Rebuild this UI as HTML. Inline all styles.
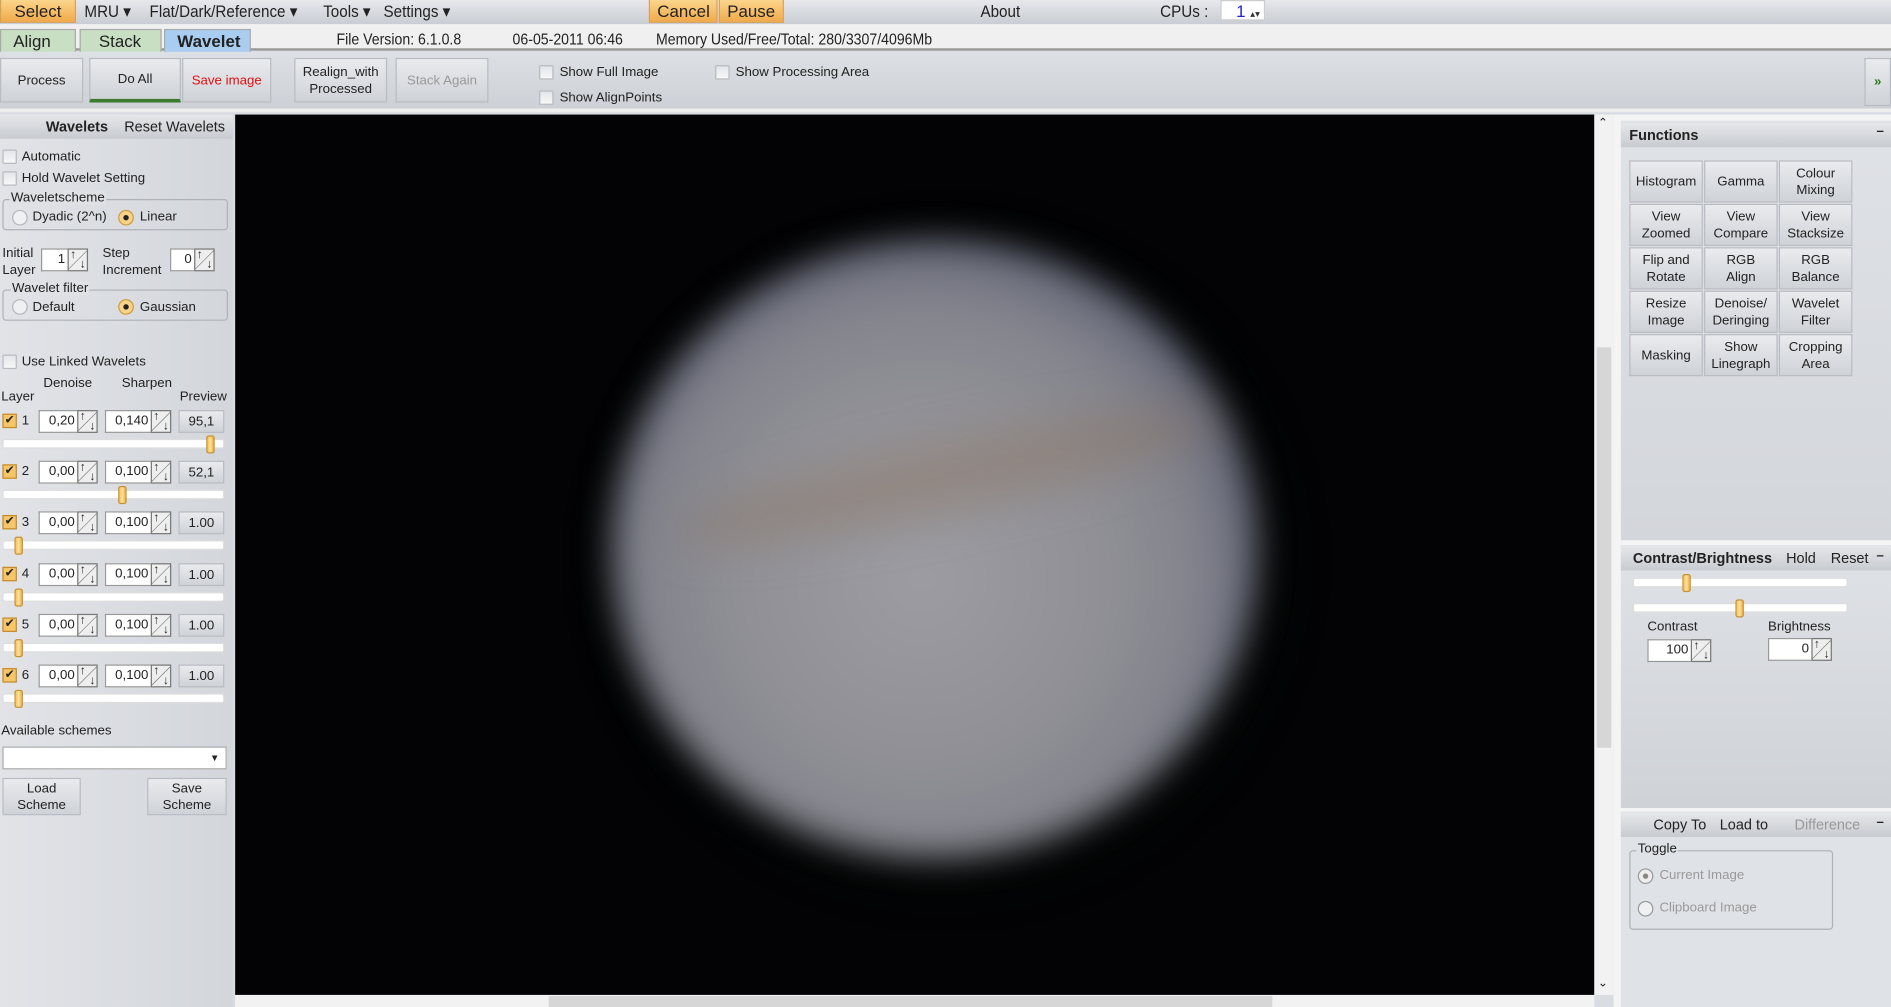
<!DOCTYPE html>
<html><head><meta charset="utf-8"><style>
*{box-sizing:border-box;margin:0;padding:0}
html,body{width:1891px;height:1007px;overflow:hidden;background:#d8dbe0}
#w{position:absolute;left:0;top:0;width:1568px;height:835px;transform:scale(1.20599);transform-origin:0 0;font-family:"Liberation Sans",sans-serif;font-size:11px;color:#222;background:#d9dce1}
.a{position:absolute}
.bar1{left:0;top:0;width:1568px;height:20px;background:linear-gradient(#e6e8ec,#c9ccd2)}
.menu{top:1px;font-size:14px;transform:scaleX(.9);transform-origin:0 0;color:#222}
.ob{background:linear-gradient(#fbd58c,#f1a94a);border:1px solid #d9a050;height:20px;font-size:14px;padding:1px 6px;color:#222}
.bar2{left:0;top:20px;width:1568px;height:22px;background:#f0f0f0;border-bottom:2px solid #999}
.tab{top:24px;height:19px;font-size:14px;padding:1px 10px;border:1px solid #aaa;border-bottom:none}
.bar3{left:0;top:43px;width:1568px;height:50px;background:linear-gradient(#dde0e4,#cdd0d6);border-bottom:3px solid #eee}
.btn{background:linear-gradient(#e9ebee,#cfd2d7);border:1px solid #b9bcc2;text-align:center;font-size:11px;display:flex;align-items:center;justify-content:center;line-height:14px}
.cb{width:12px;height:12px;border:1px solid #b7bbc1;background:linear-gradient(#e4e6ea,#f7f7f7);border-radius:1px}
.cbk{width:12px;height:12px;border:1px solid #c58a2a;background:#f5c66a;color:#222;font-size:10px;line-height:10px;text-align:center}
.inp{background:#fff;border:1px solid #999;border-right:none;text-align:right;padding-right:2px;height:19px;line-height:17px;font-size:11px}
.spin{width:17px;height:19px;border:1px solid #777;background:linear-gradient(135deg,#eee 48%,#666 50%,#eee 52%);font-size:10px;font-weight:bold}
.spin::before{content:"↑";position:absolute;left:1px;top:-1px}
.spin::after{content:"↓";position:absolute;right:1px;bottom:-1px}
.sl{height:8px;background:#fff;border:1px solid #ddd;border-radius:2px}
.th{width:7px;height:15px;background:linear-gradient(90deg,#f6c255,#fde2a0,#f1b040);border:1px solid #c99030;border-radius:2px}
.grp{border:1px solid #aeb2b8;border-radius:3px}
.rad{width:13px;height:13px;border-radius:50%;border:1px solid #b2b6bc;background:#eef0f2}
.radon{width:13px;height:13px;border-radius:50%;border:1px solid #d29a3a;background:radial-gradient(#222 25%,#f9d38a 32%)}
.fb{width:61px;height:35px}
.ph{background:linear-gradient(#e5e7ea,#c8cbd0);height:20px;font-weight:bold;font-size:12px}
</style></head><body><div id="w">
<div class="a bar1"></div>
<div class="a ob" style="left:0;top:-1px;width:63px;text-align:center">Select</div>
<div class="a menu" style="left:70px">MRU ▾</div>
<div class="a menu" style="left:124px">Flat/Dark/Reference ▾</div>
<div class="a menu" style="left:268px">Tools ▾</div>
<div class="a menu" style="left:318px">Settings ▾</div>
<div class="a ob" style="left:538px;top:-1px;width:57px">Cancel</div>
<div class="a ob" style="left:596px;top:-1px;width:54px">Pause</div>
<div class="a menu" style="left:813px">About</div>
<div class="a menu" style="left:962px">CPUs :</div>
<div class="a" style="left:1012px;top:0;width:37px;height:17px;background:#fff;border:1px solid #ccc;color:#22c;font-size:14px;padding-left:12px">1 <span style="font-size:8px;color:#333">▴▾</span></div>

<div class="a bar2"></div>
<div class="a tab" style="left:0;background:#c8dfc4;width:63px">Align</div>
<div class="a tab" style="left:66px;background:#c8dfc4;width:68px;padding-left:15px">Stack</div>
<div class="a tab" style="left:136px;background:#a9cdf0;width:72px;font-weight:bold">Wavelet</div>
<div class="a" style="left:279px;top:25px;font-size:13px;transform:scaleX(.9);transform-origin:0 0">File Version: 6.1.0.8</div>
<div class="a" style="left:425px;top:25px;font-size:13px;transform:scaleX(.9);transform-origin:0 0">06-05-2011 06:46</div>
<div class="a" style="left:544px;top:25px;font-size:13px;transform:scaleX(.9);transform-origin:0 0">Memory Used/Free/Total: 280/3307/4096Mb</div>

<div class="a bar3"></div>
<div class="a btn" style="left:0;top:48px;width:69px;height:37px">Process</div>
<div class="a btn" style="left:74px;top:48px;width:76px;height:37px;border-bottom:3px solid #3b7a2f">Do All</div>
<div class="a btn" style="left:151px;top:48px;width:74px;height:37px;color:#e01010">Save image</div>
<div class="a btn" style="left:244px;top:48px;width:77px;height:37px">Realign_with<br>Processed</div>
<div class="a btn" style="left:328px;top:48px;width:77px;height:37px;color:#999">Stack Again</div>
<div class="a cb" style="left:447px;top:54px"></div><div class="a" style="left:464px;top:54px">Show Full Image</div>
<div class="a cb" style="left:447px;top:75px"></div><div class="a" style="left:464px;top:75px">Show AlignPoints</div>
<div class="a cb" style="left:593px;top:54px"></div><div class="a" style="left:610px;top:54px">Show Processing Area</div>
<div class="a btn" style="left:1546px;top:48px;width:22px;height:40px;color:#2a7a1a;font-weight:bold">»</div>

<!-- left panel -->
<div class="a" style="left:0;top:95px;width:193px;height:740px;background:linear-gradient(90deg,#e1e3e7,#d3d6db)"></div>
<div class="a ph" style="left:0;top:95px;width:193px"></div>
<div class="a" style="left:38px;top:98px;font-weight:bold;font-size:12px">Wavelets</div>
<div class="a" style="left:103px;top:98px;font-size:12px">Reset Wavelets</div>
<div class="a cb" style="left:2px;top:124px"></div><div class="a" style="left:18px;top:124px">Automatic</div>
<div class="a cb" style="left:2px;top:142px"></div><div class="a" style="left:18px;top:142px">Hold Wavelet Setting</div>
<div class="a grp" style="left:2px;top:165px;width:187px;height:26px"></div>
<div class="a" style="left:8px;top:158px;background:#dfe1e5;padding:0 1px">Waveletscheme</div>
<div class="a rad" style="left:10px;top:174px"></div><div class="a" style="left:27px;top:174px">Dyadic (2^n)</div>
<div class="a radon" style="left:98px;top:174px"></div><div class="a" style="left:116px;top:174px">Linear</div>
<div class="a" style="left:2px;top:203px;line-height:14px">Initial<br>Layer</div>
<div class="a inp" style="left:34px;top:206px;width:22px">1</div><div class="a spin" style="left:56px;top:206px"></div>
<div class="a" style="left:85px;top:203px;line-height:14px">Step<br>Increment</div>
<div class="a inp" style="left:141px;top:206px;width:20px">0</div><div class="a spin" style="left:161px;top:206px"></div>
<div class="a grp" style="left:2px;top:240px;width:187px;height:26px"></div>
<div class="a" style="left:9px;top:233px;background:#dfe1e5;padding:0 1px">Wavelet filter</div>
<div class="a rad" style="left:10px;top:248px"></div><div class="a" style="left:27px;top:249px">Default</div>
<div class="a radon" style="left:98px;top:248px"></div><div class="a" style="left:116px;top:249px">Gaussian</div>
<div class="a cb" style="left:2px;top:294px"></div><div class="a" style="left:18px;top:294px">Use Linked Wavelets</div>
<div class="a" style="left:36px;top:312px">Denoise</div><div class="a" style="left:101px;top:312px">Sharpen</div>
<div class="a" style="left:1px;top:323px">Layer</div><div class="a" style="left:149px;top:323px">Preview</div>

<div class="a" style="left:0;top:340px">
 <div class="a cbk" style="left:2px;top:3px">✔</div><div class="a" style="left:18px;top:3px">1</div>
 <div class="a inp" style="left:32px;top:0;width:32px">0,20</div><div class="a spin" style="left:64px;top:0"></div>
 <div class="a inp" style="left:87px;top:0;width:38px">0,140</div><div class="a spin" style="left:125px;top:0"></div>
 <div class="a btn" style="left:148px;top:0;width:38px;height:19px">95,1</div>
 <div class="a sl" style="left:2px;top:24px;width:184px"></div><div class="a th" style="left:171px;top:21px"></div>
</div>
<div class="a" style="left:0;top:382px">
 <div class="a cbk" style="left:2px;top:3px">✔</div><div class="a" style="left:18px;top:3px">2</div>
 <div class="a inp" style="left:32px;top:0;width:32px">0,00</div><div class="a spin" style="left:64px;top:0"></div>
 <div class="a inp" style="left:87px;top:0;width:38px">0,100</div><div class="a spin" style="left:125px;top:0"></div>
 <div class="a btn" style="left:148px;top:0;width:38px;height:19px">52,1</div>
 <div class="a sl" style="left:2px;top:24px;width:184px"></div><div class="a th" style="left:98px;top:21px"></div>
</div>
<div class="a" style="left:0;top:424px">
 <div class="a cbk" style="left:2px;top:3px">✔</div><div class="a" style="left:18px;top:3px">3</div>
 <div class="a inp" style="left:32px;top:0;width:32px">0,00</div><div class="a spin" style="left:64px;top:0"></div>
 <div class="a inp" style="left:87px;top:0;width:38px">0,100</div><div class="a spin" style="left:125px;top:0"></div>
 <div class="a btn" style="left:148px;top:0;width:38px;height:19px">1.00</div>
 <div class="a sl" style="left:2px;top:24px;width:184px"></div><div class="a th" style="left:12px;top:21px"></div>
</div>
<div class="a" style="left:0;top:467px">
 <div class="a cbk" style="left:2px;top:3px">✔</div><div class="a" style="left:18px;top:3px">4</div>
 <div class="a inp" style="left:32px;top:0;width:32px">0,00</div><div class="a spin" style="left:64px;top:0"></div>
 <div class="a inp" style="left:87px;top:0;width:38px">0,100</div><div class="a spin" style="left:125px;top:0"></div>
 <div class="a btn" style="left:148px;top:0;width:38px;height:19px">1.00</div>
 <div class="a sl" style="left:2px;top:24px;width:184px"></div><div class="a th" style="left:12px;top:21px"></div>
</div>
<div class="a" style="left:0;top:509px">
 <div class="a cbk" style="left:2px;top:3px">✔</div><div class="a" style="left:18px;top:3px">5</div>
 <div class="a inp" style="left:32px;top:0;width:32px">0,00</div><div class="a spin" style="left:64px;top:0"></div>
 <div class="a inp" style="left:87px;top:0;width:38px">0,100</div><div class="a spin" style="left:125px;top:0"></div>
 <div class="a btn" style="left:148px;top:0;width:38px;height:19px">1.00</div>
 <div class="a sl" style="left:2px;top:24px;width:184px"></div><div class="a th" style="left:12px;top:21px"></div>
</div>
<div class="a" style="left:0;top:551px">
 <div class="a cbk" style="left:2px;top:3px">✔</div><div class="a" style="left:18px;top:3px">6</div>
 <div class="a inp" style="left:32px;top:0;width:32px">0,00</div><div class="a spin" style="left:64px;top:0"></div>
 <div class="a inp" style="left:87px;top:0;width:38px">0,100</div><div class="a spin" style="left:125px;top:0"></div>
 <div class="a btn" style="left:148px;top:0;width:38px;height:19px">1.00</div>
 <div class="a sl" style="left:2px;top:24px;width:184px"></div><div class="a th" style="left:12px;top:21px"></div>
</div>
<div class="a" style="left:1px;top:600px">Available schemes</div>
<div class="a" style="left:2px;top:619px;width:186px;height:19px;background:#fff;border:1px solid #aaa;text-align:right;padding-right:5px;font-size:8px;line-height:17px">▼</div>
<div class="a btn" style="left:2px;top:645px;width:65px;height:31px">Load<br>Scheme</div>
<div class="a btn" style="left:122px;top:645px;width:66px;height:31px">Save<br>Scheme</div>

<!-- image -->
<div class="a" style="left:195px;top:95px;width:1127px;height:730px;background:#030305;overflow:hidden">
 <div class="a" style="left:290px;top:80px;width:600px;height:580px;border-radius:50%;background:radial-gradient(rgba(25,60,15,.55),transparent 70%);filter:blur(20px)"></div>
 <div class="a" style="left:312px;top:104px;width:536px;height:512px;border-radius:50%;background:radial-gradient(ellipse at 48% 55%,#9c9ca2 0%,#8f8f95 40%,#82838c 58%,#5d6072 74%,#2a2c3a 88%,#08080e 100%);filter:blur(14px)"></div>
 <div class="a" style="left:360px;top:270px;width:460px;height:60px;border-radius:50%;background:rgba(140,115,95,.4);transform:rotate(-12deg);filter:blur(18px)"></div>
</div>
<div class="a" style="left:1322px;top:95px;width:16px;height:730px;background:#f2f2f2"></div>
<div class="a" style="left:1324px;top:288px;width:12px;height:332px;background:#d6d6d6"></div>
<div class="a" style="left:1325px;top:97px;font-size:10px">⌃</div>
<div class="a" style="left:1325px;top:810px;font-size:10px">⌄</div>
<div class="a" style="left:195px;top:825px;width:1127px;height:10px;background:#f2f2f2"></div>
<div class="a" style="left:455px;top:826px;width:600px;height:9px;background:#d6d6d6"></div>

<!-- right panel -->
<div class="a" style="left:1338px;top:95px;width:230px;height:740px;background:#f4f4f4"></div>
<div class="a" style="left:1344px;top:100px;width:224px;height:348px;background:linear-gradient(#dfe2e6,#d3d6db)"></div>
<div class="a ph" style="left:1344px;top:102px;width:224px"></div>
<div class="a" style="left:1351px;top:105px;font-weight:bold;font-size:12px">Functions</div>
<div class="a" style="left:1556px;top:103px;font-weight:bold">–</div>
<div class="a btn fb" style="left:1351px;top:133px">Histogram</div>
<div class="a btn fb" style="left:1413px;top:133px">Gamma</div>
<div class="a btn fb" style="left:1475px;top:133px">Colour<br>Mixing</div>
<div class="a btn fb" style="left:1351px;top:169px">View<br>Zoomed</div>
<div class="a btn fb" style="left:1413px;top:169px">View<br>Compare</div>
<div class="a btn fb" style="left:1475px;top:169px">View<br>Stacksize</div>
<div class="a btn fb" style="left:1351px;top:205px">Flip and<br>Rotate</div>
<div class="a btn fb" style="left:1413px;top:205px">RGB<br>Align</div>
<div class="a btn fb" style="left:1475px;top:205px">RGB<br>Balance</div>
<div class="a btn fb" style="left:1351px;top:241px">Resize<br>Image</div>
<div class="a btn fb" style="left:1413px;top:241px">Denoise/<br>Deringing</div>
<div class="a btn fb" style="left:1475px;top:241px">Wavelet<br>Filter</div>
<div class="a btn fb" style="left:1351px;top:277px">Masking</div>
<div class="a btn fb" style="left:1413px;top:277px">Show<br>Linegraph</div>
<div class="a btn fb" style="left:1475px;top:277px">Cropping<br>Area</div>

<div class="a" style="left:1344px;top:452px;width:224px;height:218px;background:linear-gradient(#dfe2e6,#cfd2d7)"></div>
<div class="a ph" style="left:1344px;top:453px;width:224px"></div>
<div class="a" style="left:1354px;top:456px;font-weight:bold;font-size:12px">Contrast/Brightness</div>
<div class="a" style="left:1481px;top:456px;font-size:12px">Hold</div>
<div class="a" style="left:1518px;top:456px;font-size:12px">Reset</div>
<div class="a" style="left:1556px;top:455px;font-weight:bold">–</div>
<div class="a sl" style="left:1354px;top:479px;width:178px"></div><div class="a th" style="left:1395px;top:476px"></div>
<div class="a sl" style="left:1354px;top:500px;width:178px"></div><div class="a th" style="left:1439px;top:497px"></div>
<div class="a" style="left:1366px;top:514px">Contrast</div>
<div class="a" style="left:1466px;top:514px">Brightness</div>
<div class="a inp" style="left:1366px;top:530px;width:36px">100</div><div class="a spin" style="left:1402px;top:530px"></div>
<div class="a inp" style="left:1466px;top:529px;width:36px">0</div><div class="a spin" style="left:1502px;top:529px"></div>

<div class="a" style="left:1344px;top:673px;width:224px;height:162px;background:#dfe2e6"></div>
<div class="a ph" style="left:1344px;top:674px;width:224px"></div>
<div class="a" style="left:1371px;top:677px;font-size:12px">Copy To</div>
<div class="a" style="left:1426px;top:677px;font-size:12px">Load to</div>
<div class="a" style="left:1488px;top:677px;font-size:12px;color:#999">Difference</div>
<div class="a" style="left:1556px;top:676px;font-weight:bold">–</div>
<div class="a grp" style="left:1351px;top:705px;width:169px;height:66px"></div>
<div class="a" style="left:1357px;top:698px;background:#dfe2e6;padding:0 1px">Toggle</div>
<div class="a" style="left:1358px;top:720px;width:13px;height:13px;border-radius:50%;border:1px solid #999;background:radial-gradient(#888 25%,#eee 32%)"></div>
<div class="a" style="left:1376px;top:720px;color:#999">Current Image</div>
<div class="a rad" style="left:1358px;top:747px;border-color:#999"></div>
<div class="a" style="left:1376px;top:747px;color:#999">Clipboard Image</div>
</div></body></html>
